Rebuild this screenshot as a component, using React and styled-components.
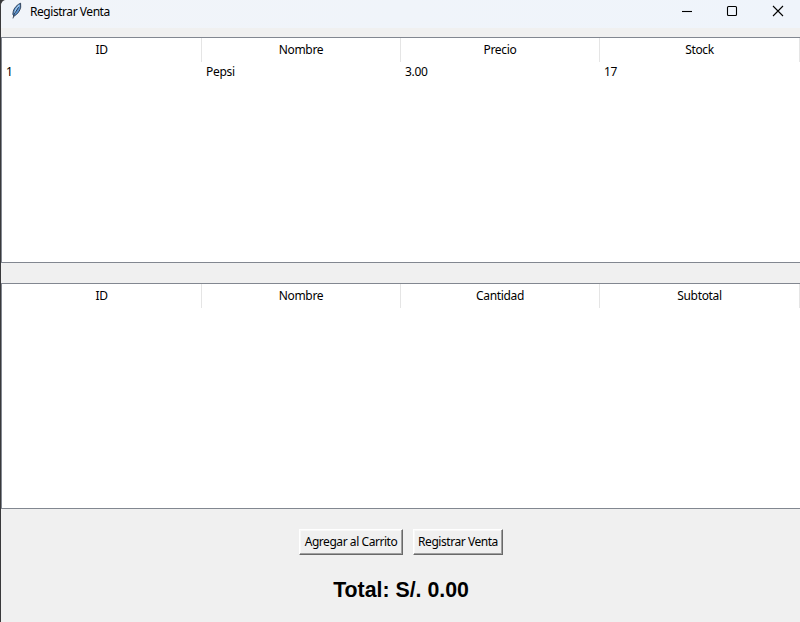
import React from "react";
import styled, { createGlobalStyle } from "styled-components";

const GlobalStyle = createGlobalStyle`
  * { box-sizing: border-box; }
  body { margin: 0; overflow: hidden; }
`;

const Window = styled.main`
  width: 800px;
  height: 622px;
  display: flex;
  flex-direction: column;
  background: #f0f0f0;
  border-left: 1px solid #39393b;
  border-top-left-radius: 6px;
  color: #000;
  font: 12px/16px "Noto Sans", "Open Sans", sans-serif;
  white-space: nowrap;
  overflow: hidden;
`;

const Backdrop = styled.div`
  background: #39393b;
`;

const TitleBar = styled.header`
  flex: none;
  height: 28px;
  display: flex;
  align-items: flex-start;
  padding: 2px 0 0 9px;
  background: linear-gradient(90deg, #f1f4f9, #eff4fb);
`;

const Title = styled.h1`
  margin: 2px 0 0 6px;
  flex: 1;
  font-size: 12px;
  font-weight: 400;
  line-height: 16px;
`;

const Label = styled.span`
  letter-spacing: ${(p) => p.$spacing || 0}px;
`;

const Controls = styled.div`
  display: flex;
`;

const ControlButton = styled.button`
  width: ${(p) => p.$width || 45}px;
  height: 18px;
  padding: 0;
  border: 0;
  background: transparent;
  display: flex;
  align-items: center;
  justify-content: center;
`;

const Tables = styled.section`
  display: flex;
  flex-direction: column;
  gap: 20px;
  margin-top: 9px;
`;

const Tree = styled.div`
  height: 226px;
  background: #fff;
  border: 1px solid #828790;
  border-right: 0;
  letter-spacing: -0.32px;
`;

const HeaderRow = styled.div`
  display: grid;
  grid-template-columns: 200px 199px 199px 200px;
  height: 24px;
`;

const HeaderCell = styled.div`
  border-right: 1px solid #e5e5e5;
  text-align: center;
  line-height: 24px;
`;

const BodyRow = styled(HeaderRow)`
  height: 20px;
`;

const Cell = styled.div`
  padding-left: 4px;
  line-height: 20px;
`;

const Actions = styled.div`
  display: flex;
  justify-content: center;
  gap: 10px;
  margin-top: 20px;
  padding-left: 1px;
`;

const ActionButton = styled.button`
  width: ${(p) => p.$width}px;
  height: 26px;
  padding: 0;
  font: inherit;
  color: inherit;
  background: #f0f0f0;
  border: 1px solid;
  border-color: #fff #696969 #696969 #fff;
  box-shadow: inset -1px -1px #a0a0a0, inset 1px 1px #f8f8f8;
`;

const Total = styled.p`
  margin: 22px 0 0;
  padding-left: 1px;
  text-align: center;
  font: bold 21.3px/26px "Liberation Sans", Arial, sans-serif;
`;

const Feather = () => (
  <svg width="14" height="18" viewBox="0 0 14 18">
    <path d="M10.6 1.2C7.4 2.4 4 6 3.3 9.2L2.8 12.6 4.3 14C7.7 12 10 8.8 10.7 5.3Z" fill="#5a93d0" stroke="#172338" strokeWidth=".8" />
    <path d="M9.3 3C7 5.3 5.3 8.5 4.6 11.5" fill="none" stroke="#a6cbed" strokeWidth="1.3" />
    <path d="M8.6 5.2 4.2 12.2 3 16.4" fill="none" stroke="#172338" strokeWidth=".8" />
  </svg>
);

const Glyph = ({ d }) => (
  <svg width="12" height="12" viewBox="0 0 12 12" fill="none" stroke="#000" strokeWidth="1.1">
    <path d={d} />
  </svg>
);

const DataTable = ({ columns, rows }) => (
  <Tree>
    <HeaderRow>
      {columns.map((c) => <HeaderCell key={c}>{c}</HeaderCell>)}
    </HeaderRow>
    {rows.map((row) => (
      <BodyRow key={row[0]}>
        {row.map((value, i) => <Cell key={i}>{value}</Cell>)}
      </BodyRow>
    ))}
  </Tree>
);

export default function App() {
  return (
    <Backdrop>
      <GlobalStyle />
      <Window>
        <TitleBar>
          <Feather />
          <Title><Label $spacing={-0.45}>Registrar Venta</Label></Title>
          <Controls>
            <ControlButton $width={42} aria-label="Minimizar"><Glyph d="M1 6.5H11" /></ControlButton>
            <ControlButton $width={48} aria-label="Maximizar">
              <Glyph d="M2.5 1.5H9.5Q10.5 1.5 10.5 2.5V9.5Q10.5 10.5 9.5 10.5H2.5Q1.5 10.5 1.5 9.5V2.5Q1.5 1.5 2.5 1.5Z" />
            </ControlButton>
            <ControlButton $width={44} aria-label="Cerrar"><Glyph d="M1 1 11 11M11 1 1 11" /></ControlButton>
          </Controls>
        </TitleBar>
        <Tables>
          <DataTable columns={["ID", "Nombre", "Precio", "Stock"]} rows={[["1", "Pepsi", "3.00", "17"]]} />
          <DataTable columns={["ID", "Nombre", "Cantidad", "Subtotal"]} rows={[]} />
        </Tables>
        <Actions>
          <ActionButton $width={104}><Label $spacing={-0.44}>Agregar al Carrito</Label></ActionButton>
          <ActionButton $width={90}><Label $spacing={-0.45}>Registrar Venta</Label></ActionButton>
        </Actions>
        <Total>Total: S/. 0.00</Total>
      </Window>
    </Backdrop>
  );
}
